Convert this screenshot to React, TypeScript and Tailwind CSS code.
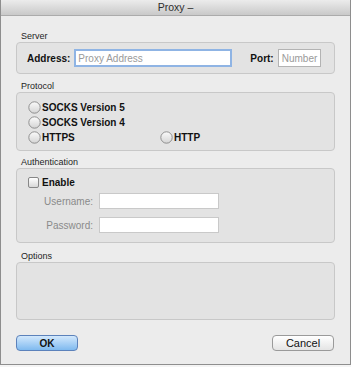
import React from "react";

const Radio = () => (
  <svg width="13" height="13" viewBox="0 0 13 13" className="shrink-0">
    <defs>
      <linearGradient id="rg" x1="0" y1="0" x2="0" y2="1">
        <stop offset="0" stopColor="#fbfbfb" />
        <stop offset="1" stopColor="#d4d4d4" />
      </linearGradient>
    </defs>
    <circle cx="6.5" cy="6.5" r="5.7" fill="url(#rg)" stroke="#878787" strokeWidth="0.9" />
  </svg>
);

const Section = ({ title, h, children }: { title: string; h: string; children?: React.ReactNode }) => (
  <div className="flex flex-col">
    <div className="h-[11px] leading-[11px] text-[9px] pl-[5px] text-[#1e1e1e]">{title}</div>
    <div className={`${h} rounded-[4px] border border-[#c8c8c8] bg-[#e3e3e3]`}>{children}</div>
  </div>
);

export default function App() {
  return (
    <div className="w-[351px] h-[367px] bg-[#f4f4f4] font-['Liberation_Sans',Arial,sans-serif]">
      <div className="w-[351px] h-[365px] bg-[#ececec] border-x border-b border-[#8e8e8e] flex flex-col">
        <div className="h-[16px] shrink-0 bg-linear-to-b from-[#ececec] to-[#c9c9c9] border-b border-[#ababab] flex items-center justify-center text-[10.5px] leading-none text-[#2e2e2e]">
          Proxy –
        </div>
        <div className="flex flex-col px-[15px] pt-[15px]">
          <Section title="Server" h="h-[32px]">
            <div className="flex items-center h-full pl-[10px]">
              <span className="text-[10px] font-bold text-[#111]">Address:</span>
              <div className="ml-[4px] w-[158px] h-[18px] border-2 border-[#8fb4e4] bg-white flex items-center pl-[2px] text-[10px] text-[#9a9a9a]">
                Proxy Address
              </div>
              <span className="ml-[18px] text-[10px] font-bold text-[#111]">Port:</span>
              <div className="ml-[4px] w-[43px] h-[18px] border border-[#b3b3b3] bg-white flex items-center pl-[3px] text-[10px] text-[#9a9a9a]">
                Number
              </div>
            </div>
          </Section>

          <div className="mt-[7px]">
            <Section title="Protocol" h="h-[59px]">
              <div className="flex flex-col pt-[7px] pl-[11px] text-[10px] font-bold text-[#111]">
                <div className="h-[15px] flex items-center gap-[1px]">
                  <Radio />
                  <span>SOCKS Version 5</span>
                </div>
                <div className="h-[15px] flex items-center gap-[1px]">
                  <Radio />
                  <span>SOCKS Version 4</span>
                </div>
                <div className="h-[15px] flex items-center">
                  <div className="w-[132px] flex items-center gap-[1px]">
                    <Radio />
                    <span>HTTPS</span>
                  </div>
                  <div className="flex items-center gap-[1px]">
                    <Radio />
                    <span>HTTP</span>
                  </div>
                </div>
              </div>
            </Section>
          </div>

          <div className="mt-[6px]">
            <Section title="Authentication" h="h-[75px]">
              <div className="flex flex-col pt-[6px] pl-[11px]">
                <div className="h-[14px] flex items-center gap-[3px]">
                  <div className="w-[11px] h-[11px] rounded-[2px] border border-[#878787] bg-linear-to-b from-white to-[#d8d8d8]" />
                  <span className="text-[10px] font-bold text-[#111]">Enable</span>
                </div>
                <div className="mt-[4px] h-[16px] flex items-center">
                  <span className="w-[65px] text-right text-[10px] text-[#8a8a8a]">Username:</span>
                  <div className="ml-[6px] w-[120px] h-[16px] border border-[#c9c9c9] bg-white" />
                </div>
                <div className="mt-[8px] h-[16px] flex items-center">
                  <span className="w-[65px] text-right text-[10px] text-[#8a8a8a]">Password:</span>
                  <div className="ml-[6px] w-[120px] h-[16px] border border-[#c9c9c9] bg-white" />
                </div>
              </div>
            </Section>
          </div>

          <div className="mt-[8px]">
            <Section title="Options" h="h-[58px]" />
          </div>

          <div className="mt-[15px] flex justify-between">
            <div className="w-[62px] h-[16px] rounded-[4px] border border-[#5c82bb] bg-linear-to-b from-[#d2e8fc] to-[#7fbaef] flex items-center justify-center text-[10px] font-bold text-[#111]">
              OK
            </div>
            <div className="mr-[1px] w-[62px] h-[16px] rounded-[4px] border border-[#9a9a9a] bg-linear-to-b from-white to-[#e4e4e4] flex items-center justify-center text-[11px] text-[#111]">
              Cancel
            </div>
          </div>
        </div>
      </div>
    </div>
  );
}
